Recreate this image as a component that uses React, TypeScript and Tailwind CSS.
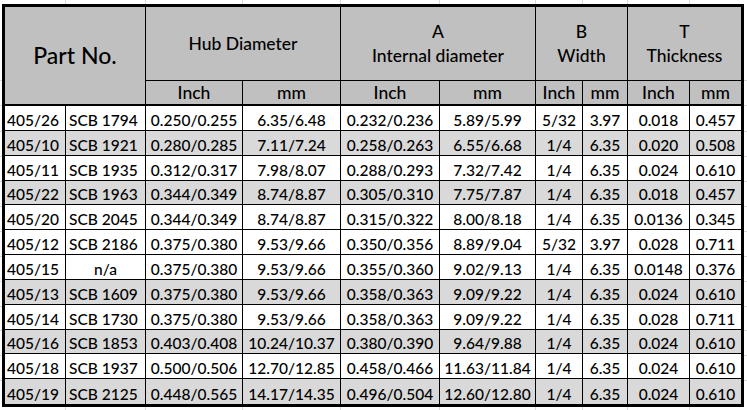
import React from 'react';

const rows: string[][] = [
  ['405/26', 'SCB 1794', '0.250/0.255', '6.35/6.48', '0.232/0.236', '5.89/5.99', '5/32', '3.97', '0.018', '0.457'],
  ['405/10', 'SCB 1921', '0.280/0.285', '7.11/7.24', '0.258/0.263', '6.55/6.68', '1/4', '6.35', '0.020', '0.508'],
  ['405/11', 'SCB 1935', '0.312/0.317', '7.98/8.07', '0.288/0.293', '7.32/7.42', '1/4', '6.35', '0.024', '0.610'],
  ['405/22', 'SCB 1963', '0.344/0.349', '8.74/8.87', '0.305/0.310', '7.75/7.87', '1/4', '6.35', '0.018', '0.457'],
  ['405/20', 'SCB 2045', '0.344/0.349', '8.74/8.87', '0.315/0.322', '8.00/8.18', '1/4', '6.35', '0.0136', '0.345'],
  ['405/12', 'SCB 2186', '0.375/0.380', '9.53/9.66', '0.350/0.356', '8.89/9.04', '5/32', '3.97', '0.028', '0.711'],
  ['405/15', 'n/a', '0.375/0.380', '9.53/9.66', '0.355/0.360', '9.02/9.13', '1/4', '6.35', '0.0148', '0.376'],
  ['405/13', 'SCB 1609', '0.375/0.380', '9.53/9.66', '0.358/0.363', '9.09/9.22', '1/4', '6.35', '0.024', '0.610'],
  ['405/14', 'SCB 1730', '0.375/0.380', '9.53/9.66', '0.358/0.363', '9.09/9.22', '1/4', '6.35', '0.028', '0.711'],
  ['405/16', 'SCB 1853', '0.403/0.408', '10.24/10.37', '0.380/0.390', '9.64/9.88', '1/4', '6.35', '0.024', '0.610'],
  ['405/18', 'SCB 1937', '0.500/0.506', '12.70/12.85', '0.458/0.466', '11.63/11.84', '1/4', '6.35', '0.024', '0.610'],
  ['405/19', 'SCB 2125', '0.448/0.565', '14.17/14.35', '0.496/0.504', '12.60/12.80', '1/4', '6.35', '0.024', '0.610'],
];

const greyRows = [1, 3, 7, 9, 11];

function Group({ top, label, last }: { top?: string; label: string; last?: boolean }) {
  return (
    <div
      className={`col-span-2 flex flex-col items-center justify-center border-b border-black bg-[#c0c0c0] text-[17.5px] leading-[24px] ${
        last ? '' : 'border-r'
      }`}
    >
      {top && <span>{top}</span>}
      <span>{label}</span>
    </div>
  );
}

function Unit({ label, last }: { label: string; last?: boolean }) {
  return (
    <div
      className={`flex items-end justify-center border-b-2 border-black bg-[#c0c0c0] pb-[0px] text-[17.5px] leading-[22px] ${
        last ? '' : 'border-r'
      }`}
    >
      {label}
    </div>
  );
}

export default function App() {
  return (
    <div
      className="h-[410px] w-[747px] overflow-hidden bg-white pl-[2px] pt-[4px] font-medium text-black bg-[linear-gradient(to_right,transparent_0_65px,#dadada_65px_66px,transparent_66px_145px,#dadada_145px_146px,transparent_146px_242px,#dadada_242px_243px,transparent_243px_340px,#dadada_340px_341px,transparent_341px_439px,#dadada_439px_440px,transparent_440px_535px,#dadada_535px_536px,transparent_536px_582px,#dadada_582px_583px,transparent_583px_627px,#dadada_627px_628px,transparent_628px_689px,#dadada_689px_690px,transparent_690px),linear-gradient(to_bottom,transparent_0_80px,#dadada_80px_81px,transparent_81px_105px,#dadada_105px_106px,transparent_106px_131px,#dadada_131px_132px,transparent_132px_156px,#dadada_156px_157px,transparent_157px_181px,#dadada_181px_182px,transparent_182px_206px,#dadada_206px_207px,transparent_207px_231px,#dadada_231px_232px,transparent_232px_256px,#dadada_256px_257px,transparent_257px_281px,#dadada_281px_282px,transparent_282px_306px,#dadada_306px_307px,transparent_307px_330px,#dadada_330px_331px,transparent_331px_355px,#dadada_355px_356px,transparent_356px_380px,#dadada_380px_381px,transparent_381px)]"
      style={{ fontFamily: 'Lato, "Open Sans", sans-serif' }}
    >
      <div className="grid h-[403px] w-[742px] grid-cols-[61px_80px_97px_98px_99px_96px_47px_45px_62px_51px] grid-rows-[74px_25px_repeat(12,minmax(0,1fr))] border-[3px] border-black bg-white">
        <div className="col-span-2 row-span-2 flex items-center justify-center border-b-2 border-r border-black bg-[#c0c0c0] text-[23px]">
          Part No.
        </div>
        <Group label="Hub Diameter" />
        <Group top="A" label="Internal diameter" />
        <Group top="B" label="Width" />
        <Group top="T" label="Thickness" last />

        {['Inch', 'mm', 'Inch', 'mm', 'Inch', 'mm', 'Inch', 'mm'].map((u, i) => (
          <Unit key={i} label={u} last={i === 7} />
        ))}

        {rows.map((row, r) =>
          row.map((cell, c) => {
            const left = (c === 0 || c === 1) && cell !== 'n/a';
            return (
              <div
                key={`${r}-${c}`}
                className={`flex items-end whitespace-nowrap border-black pb-[0px] text-[15.5px] leading-[20px] ${
                  greyRows.includes(r) ? 'bg-[#d9d9d9]' : 'bg-white'
                } ${c < 9 ? 'border-r' : ''} ${r < 11 ? 'border-b' : ''} ${
                  left ? (c === 0 ? 'justify-start pl-[2px]' : 'justify-start pl-[3px]') : 'justify-center'
                }`}
              >
                {cell}
              </div>
            );
          })
        )}
      </div>
    </div>
  );
}
